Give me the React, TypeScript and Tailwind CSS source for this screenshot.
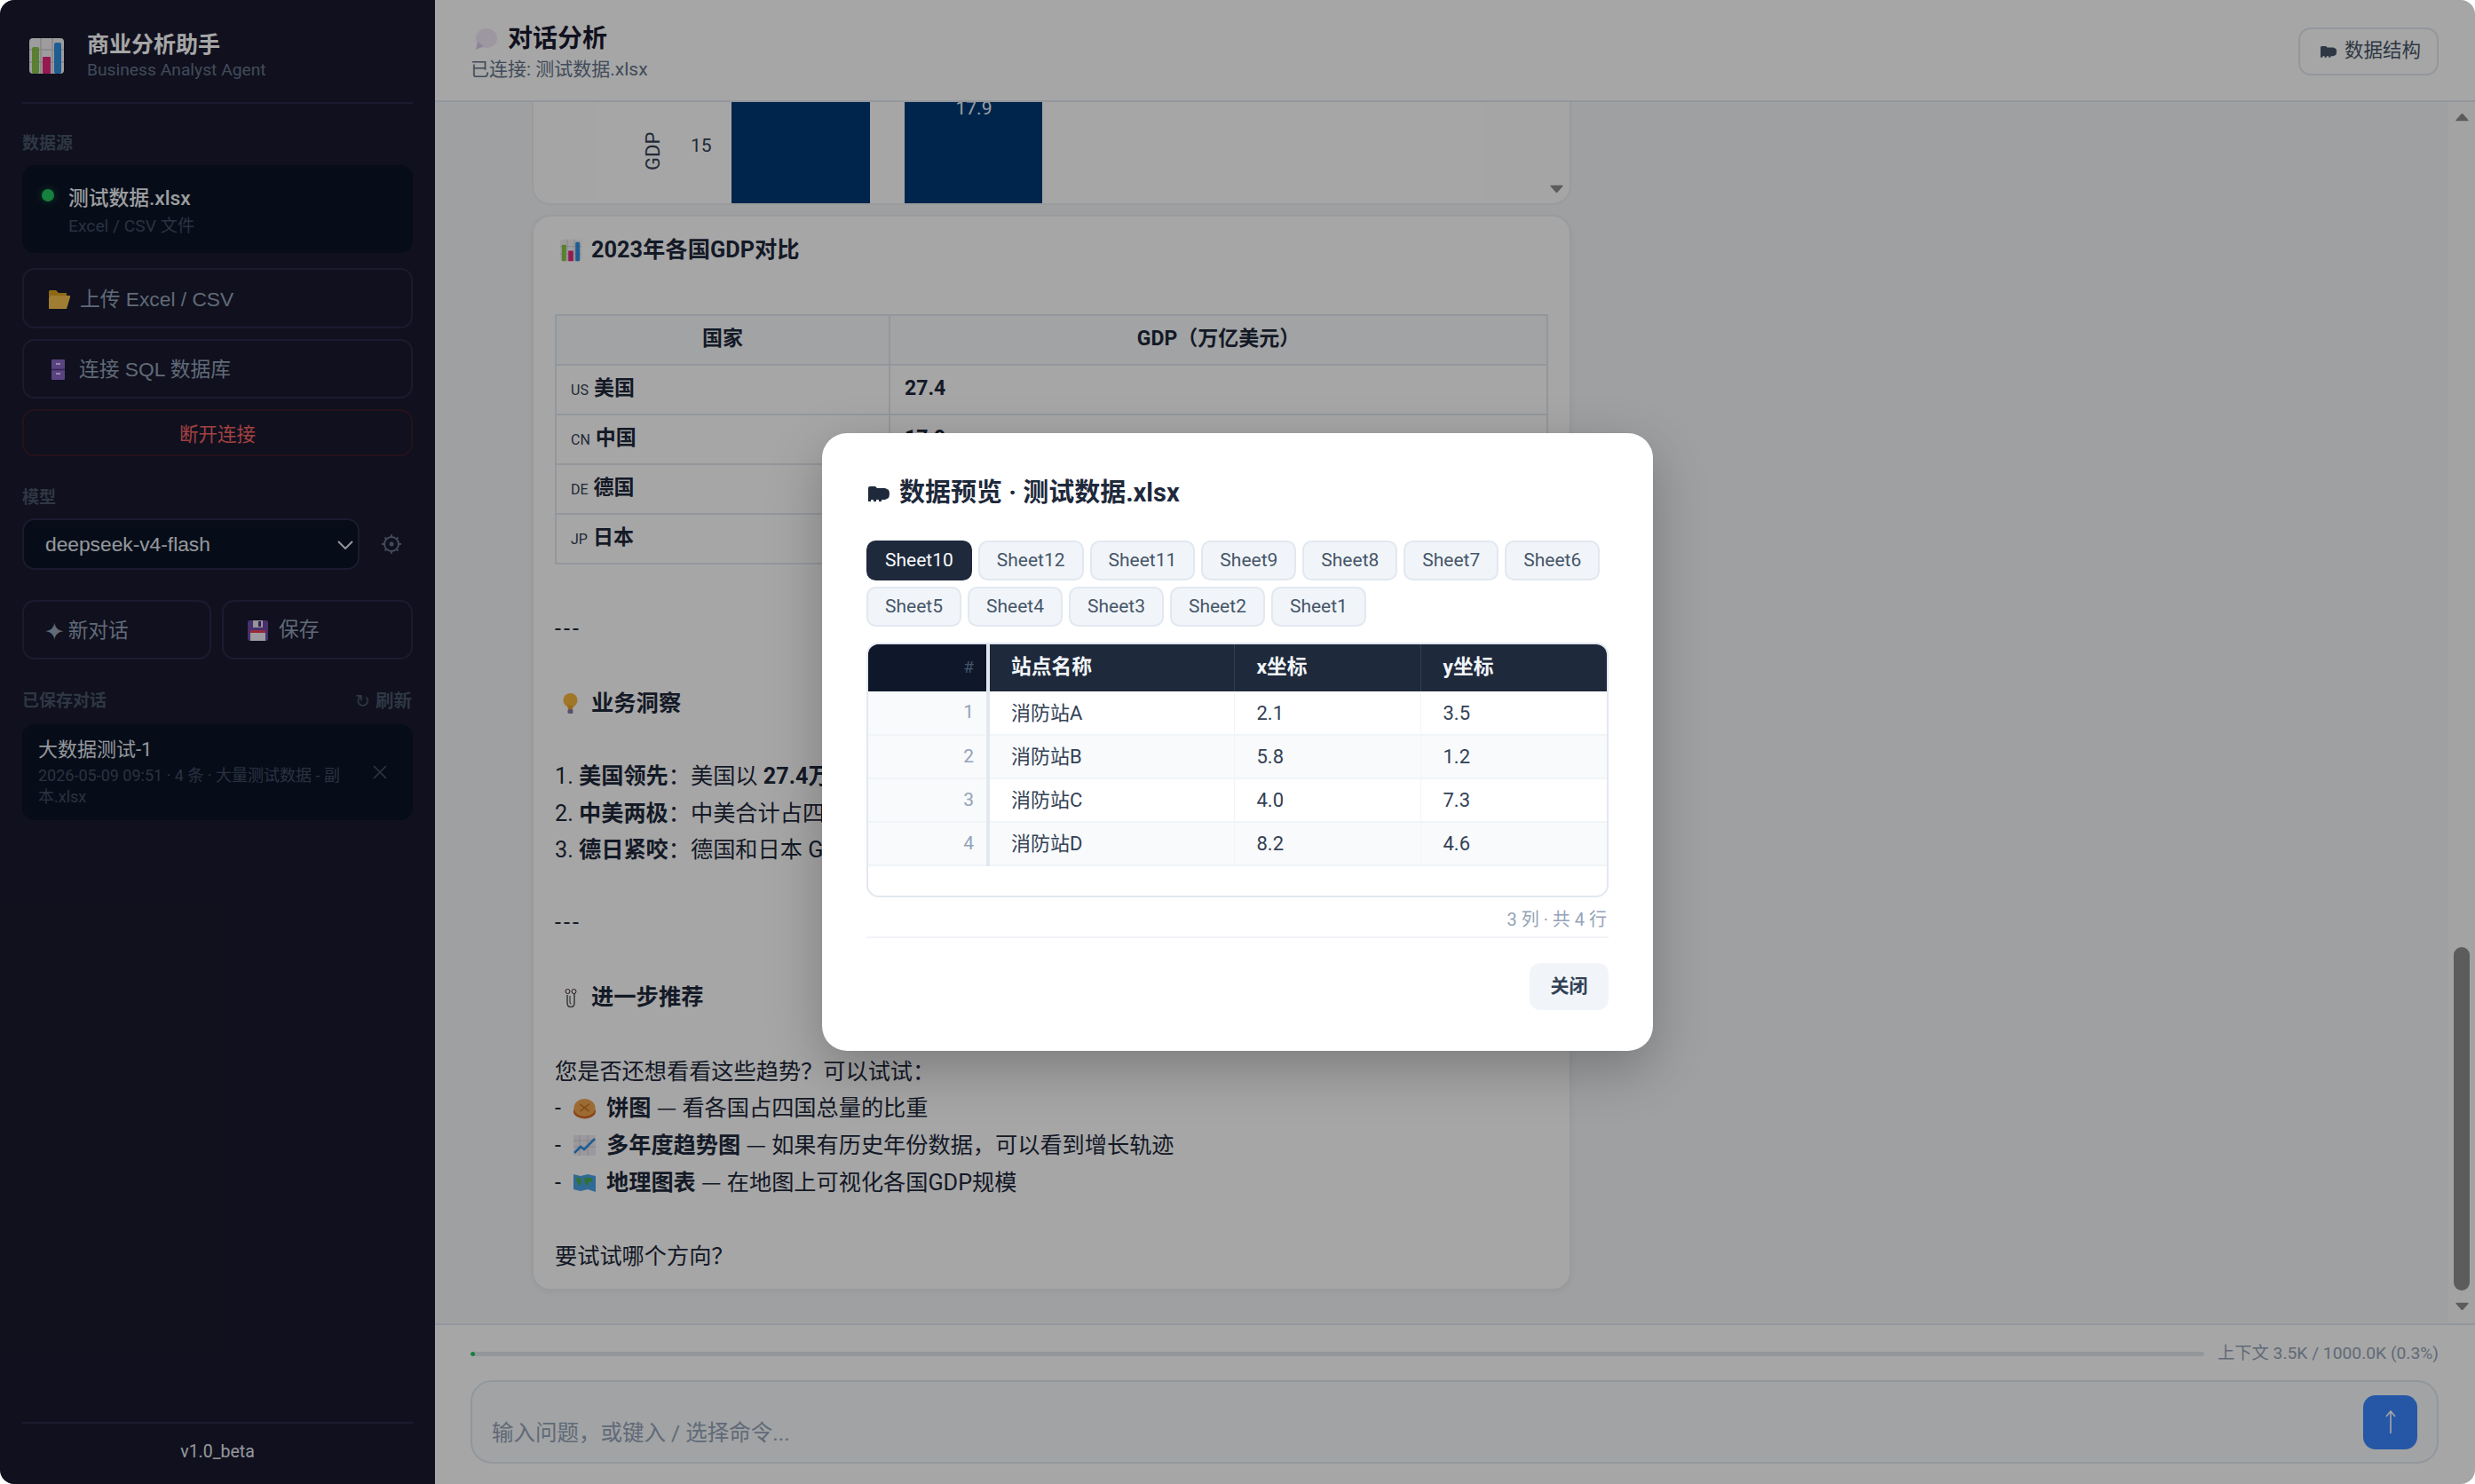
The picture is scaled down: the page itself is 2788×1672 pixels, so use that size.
import React from "react";

const Bars = ({ w, h }: { w: number; h: number }) => (
  <svg width={w} height={h} viewBox="0 0 39 40" className="shrink-0">
    <rect width="39" height="40" rx="4" fill="#f3f1f3" />
    <path d="M0 13H39M0 27H39M13 0V40M26 0V40" stroke="#cfcbd2" strokeWidth="1.5" />
    <rect x="3" y="10" width="8" height="30" rx="2" fill="#8bc34a" />
    <rect x="15" y="21" width="9" height="19" rx="1" fill="#e5267b" />
    <rect x="28" y="5" width="8" height="35" rx="2" fill="#2e8fe0" />
  </svg>
);
const Folder = () => (
  <svg width="24" height="21" viewBox="0 0 24 21" className="shrink-0">
    <path d="M0 1.500Q0 0 1.500 0H8L11 3H20V7H0Z" fill="#d9a21f" />
    <path d="M0 21V8Q1 6 3 6H23Q24.500 6 24 8L20 21Z" fill="#f4c04e" />
  </svg>
);
const Cabinet = () => (
  <svg width="15" height="23" viewBox="0 0 15 23" className="shrink-0">
    <rect width="15" height="23" rx="1" fill="#8a67c7" />
    <path d="M0 11.500H15" stroke="#4d3380" strokeWidth="1.500" />
    <rect x="5" y="4" width="5" height="2" fill="#e3d8f5" />
    <rect x="5" y="15" width="5" height="2" fill="#e3d8f5" />
  </svg>
);
const Floppy = () => (
  <svg width="23" height="23" viewBox="0 0 23 23" className="shrink-0">
    <rect width="23" height="23" rx="2" fill="#6d4aa8" />
    <rect x="6" y="0" width="11" height="8" fill="#e8e4ee" />
    <rect x="12" y="1" width="3" height="6" fill="#4d3380" />
    <rect x="3" y="11" width="17" height="12" fill="#f3eff7" />
    <rect x="3" y="11" width="17" height="3" fill="#ef3f5c" />
  </svg>
);
const Speech = () => (
  <svg width="28" height="24" viewBox="0 0 28 24" className="shrink-0">
    <ellipse cx="15" cy="11" rx="12" ry="11" fill="#f0e9f8" />
    <path d="M5 15L3 24L12 20Z" fill="#d9cbea" />
  </svg>
);
const Blob = ({ c, w = 25, h = 18 }: { c: string; w?: number; h?: number }) => (
  <svg width={w} height={h} viewBox="0 0 25 18" className="shrink-0">
    <path d="M0 3Q0 1 2 1H8L10 3H19L23 5Q25 9 23 14L19 16H15V18H12V16H9V18H6V16H3V18H0Z" fill={c} />
  </svg>
);
const Bulb = () => (
  <svg width="17" height="24" viewBox="0 0 17 24" className="shrink-0">
    <circle cx="8.500" cy="8" r="8" fill="#f6b73c" />
    <path d="M5 14H12L11 18H6Z" fill="#e8a32a" />
    <rect x="5.500" y="18" width="6" height="5" rx="1.500" fill="#8d7ca8" />
  </svg>
);
const Clip = () => (
  <svg width="14" height="24" viewBox="0 0 14 24" className="shrink-0" fill="none">
    <path d="M3 9V18Q3 22.500 7 22.500Q11 22.500 11 18V7" stroke="#55585e" strokeWidth="1.500" />
    <path d="M6 10V17Q6 19 7.500 19" stroke="#55585e" strokeWidth="1.200" />
    <circle cx="3.500" cy="5" r="2.500" fill="#fff" stroke="#3a2320" />
    <circle cx="10.500" cy="5" r="2.500" fill="#fff" stroke="#3a2320" />
  </svg>
);
const Pie = () => (
  <svg width="25" height="24" viewBox="0 0 24 22" className="shrink-0">
    <ellipse cx="12" cy="14" rx="12" ry="8" fill="#d46a26" />
    <ellipse cx="12" cy="10" rx="11.500" ry="9.500" fill="#f0a550" />
    <path d="M7 6L17 14M17 6L7 14" stroke="#c77127" strokeWidth="1.500" />
  </svg>
);
const Trend = () => (
  <svg width="25" height="23" viewBox="0 0 25 23" className="shrink-0">
    <rect width="25" height="23" fill="#efecf3" />
    <path d="M0 6H25M0 13H25M7 0V23M16 0V23" stroke="#cfcbd6" strokeWidth="1" />
    <path d="M1 20L8 13L12 16L24 4" stroke="#2f8fe0" strokeWidth="2.500" fill="none" />
  </svg>
);
const MapIcon = () => (
  <svg width="25" height="21" viewBox="0 0 25 21" className="shrink-0">
    <path d="M0 1L8 3L16 1L25 3V21L16 18L8 20L0 18Z" fill="#4aa3e8" />
    <path d="M3 5L8 5L9 10L6 14L4 10ZM12 5H20L22 9L17 10L16 15L13 11Z" fill="#4caf50" />
  </svg>
);
const Down = ({ s = 25, h = 14 }: { s?: number; h?: number }) => (
  <svg width={s} height={h} viewBox="0 0 16 9"><path d="M1 0H15Q16 0 15.500 1L9 8.500Q8 9 7 8.500L.5 1Q0 0 1 0Z" fill="#8e8e8e" /></svg>
);
const Dash = () => <span className="font-['Noto_Sans_CJK_SC',sans-serif] leading-none">—</span>;

const cjk = "font-['Roboto','Noto_Sans_CJK_SC',sans-serif]";
const arial = "font-['Liberation_Sans','Noto_Sans_CJK_SC',sans-serif]";

const tabs = ["Sheet12", "Sheet11", "Sheet9", "Sheet8", "Sheet7", "Sheet6", "Sheet5", "Sheet4", "Sheet3", "Sheet2", "Sheet1"];
const rows = [
  ["1", "消防站A", "2.1", "3.5"],
  ["2", "消防站B", "5.8", "1.2"],
  ["3", "消防站C", "4.0", "7.3"],
  ["4", "消防站D", "8.2", "4.6"],
];
const gdp = [
  ["US", "美国", "27.4"],
  ["CN", "中国", "17.9"],
  ["DE", "德国", "4.5"],
  ["JP", "日本", "4.2"],
];

const Sidebar = () => (
  <aside className="w-[490px] shrink-0 h-full bg-[#1a1a2e] flex flex-col px-[25px]">
    <div className="h-[117px] shrink-0 border-b-2 border-[#2a2a4a] flex items-center pl-[8px] pt-[10px] gap-[26px]">
      <Bars w={39} h={40} />
      <div className="flex flex-col">
        <span className="text-[25px] leading-[32px] font-bold text-white">商业分析助手</span>
        <span className="text-[19.250px] leading-[24px] text-[#64748b]">Business Analyst Agent</span>
      </div>
    </div>
    <div className="mt-[35px] text-[19px] leading-[20px] font-bold text-[#475569]">数据源</div>
    <div className="mt-[14px] h-[99px] shrink-0 rounded-[14px] bg-[#0b1425] flex pl-[22px] pt-[24px] gap-[16px]">
      <span className="mt-[3px] w-[14px] h-[14px] rounded-full bg-[#22c55e] shadow-[0_0_8px_#22c55e66] shrink-0" />
      <div className="flex flex-col">
        <span className="text-[22.750px] leading-[28px] font-medium text-[#eef2f7]">测试数据.xlsx</span>
        <span className="mt-[4px] text-[19.250px] leading-[26px] text-[#414e65]">Excel / CSV 文件</span>
      </div>
    </div>
    <button className={`mt-[17px] h-[68px] shrink-0 rounded-[14px] border-2 border-[#2a2a4a] flex items-center pl-[28px] pt-[2px] gap-[11px] text-[22.750px] text-[#94a3b8] ${arial}`}>
      <Folder />上传 Excel / CSV
    </button>
    <button className={`mt-[12px] h-[67px] shrink-0 rounded-[14px] border-2 border-[#2a2a4a] flex items-center pl-[31px] pt-[2px] gap-[16px] text-[22.750px] text-[#94a3b8] ${arial}`}>
      <Cabinet />连接 SQL 数据库
    </button>
    <button className={`mt-[12px] h-[53px] shrink-0 rounded-[14px] border-2 border-[#3a1c2a] flex items-center justify-center pt-[5px] text-[21.500px] text-[#f56565] ${arial}`}>
      断开连接
    </button>
    <div className="mt-[37px] text-[19px] leading-[20px] font-bold text-[#475569]">模型</div>
    <div className="mt-[13px] flex items-center gap-[25px]">
      <div className="relative w-[380px] h-[58px] shrink-0">
        <select className={`appearance-none w-full h-full rounded-[14px] border-2 border-[#2a2a4a] bg-[#0b1425] pl-[24px] text-[22.750px] text-[#e2e8f0] ${arial}`}>
          <option>deepseek-v4-flash</option>
        </select>
        <svg width="18" height="10" viewBox="0 0 18 10" className="absolute right-[7px] top-[25px]" fill="none"><path d="M1 1L9 9L17 1" stroke="#e2e8f0" strokeWidth="2" /></svg>
      </div>
      <svg width="22" height="22" viewBox="0 0 22 22" fill="none" className="shrink-0">
        <circle cx="11" cy="11" r="8" stroke="#64748b" strokeWidth="2" />
        <circle cx="11" cy="11" r="2.500" fill="#64748b" />
        <path d="M11 0V3M11 19V22M0 11H3M19 11H22M3.500 3.500L5.500 5.500M16.500 16.500L18.500 18.500M3.500 18.500L5.500 16.500M16.500 5.500L18.500 3.500" stroke="#64748b" strokeWidth="1.800" />
      </svg>
    </div>
    <div className="mt-[34px] flex gap-[12px] shrink-0">
      <button className={`w-[213px] h-[67px] rounded-[14px] border-2 border-[#2a2a4a] flex items-center pl-[23px] pt-[4px] gap-[4px] text-[22.750px] text-[#94a3b8] ${cjk}`}>
        <span className="font-['DejaVu_Sans',sans-serif] text-[27px] leading-none">✦</span>新对话
      </button>
      <button className={`flex-1 h-[67px] rounded-[14px] border-2 border-[#2a2a4a] flex items-center pl-[27px] pt-[2px] gap-[12px] text-[22.750px] text-[#94a3b8] ${cjk}`}>
        <Floppy />保存
      </button>
    </div>
    <div className="mt-[37px] flex justify-between items-center text-[19px] leading-[20px] font-bold text-[#475569]">
      <span>已保存对话</span>
      <span className="flex items-center gap-[6px] text-[20.500px] pr-[1px]"><span className="font-['DejaVu_Sans',sans-serif] font-normal">↻</span>刷新</span>
    </div>
    <div className="mt-[16px] h-[108px] shrink-0 rounded-[14px] bg-[#0b1425] flex items-center pl-[18px] gap-[14px]">
      <div className="w-[347px] shrink-0">
        <div className="text-[22px] leading-[28px] text-[#e2e8f0]">大数据测试-1</div>
        <div className="mt-[3px] text-[18px] leading-[24px] text-[#414e65]">2026-05-09 09:51 · 4 条 · 大量测试数据 - 副本.xlsx</div>
      </div>
      <svg width="16" height="16" viewBox="0 0 16 16" fill="none" className="ml-[16px]"><path d="M1 1L15 15M15 1L1 15" stroke="#475569" strokeWidth="1.500" /></svg>
    </div>
    <div className="mt-auto h-[70px] shrink-0 border-t-2 border-[#2a2a4a] flex items-center justify-center pb-[4px] text-[19.500px] text-[#e2e8f0]">v1.0_beta</div>
  </aside>
);

const ChartCard = () => (
  <div className="relative shrink-0 h-[300px] rounded-b-[21px] bg-[#fefefe] border-x-2 border-b-2 border-[#eceef2] pl-[71px] flex items-end overflow-hidden">
    <svg width="997" height="300" viewBox="0 0 997 300" className="bg-white shrink-0">
      <rect x="152" y="0" width="156" height="300" fill="#003a75" />
      <rect x="347" y="0" width="155" height="300" fill="#003a75" />
      <text x="425" y="200" textAnchor="middle" fontSize="21" fontFamily="Roboto" fill="#eef2f7">17.9</text>
      <text x="106" y="242" fontSize="21" fontFamily="Roboto" fill="#334155">15</text>
      <text transform="translate(71 263) rotate(-90)" fontSize="22" fontFamily="Roboto" fill="#334155">GDP</text>
    </svg>
    <span className="absolute right-[7px] bottom-[10px]"><Down s={15} h={12} /></span>
  </div>
);

const Body = ({ children, className = "" }: { children: React.ReactNode; className?: string }) => (
  <div className={`text-[25.200px] leading-[41.650px] text-[#1e293b] ${className}`}>{children}</div>
);
const Heading = ({ icon, children, className = "" }: { icon: React.ReactNode; children: React.ReactNode; className?: string }) => (
  <div className={`flex items-center h-[42px] text-[25.300px] font-bold text-[#1e293b] ${className}`}>
    <span className="w-[41px] flex justify-center pr-[6px] shrink-0">{icon}</span>{children}
  </div>
);
const Item = ({ icon, children }: { icon: React.ReactNode; children: React.ReactNode }) => (
  <div className="flex items-center h-[41.650px]">
    <span className="w-[21px] tracking-[3px]">-</span>{icon}<span className="ml-[12px]">{children}</span>
  </div>
);

const AnswerCard = () => (
  <div className="shrink-0 mt-[11px] rounded-[21px] bg-white border-2 border-[#eceef2] shadow-[0_2px_6px_#0000000d] px-[24px] pt-[17px] pb-[15px]">
    <Heading icon={<Bars w={24} h={26} />}>2023年各国GDP对比</Heading>
    <table className="mt-[51px] w-full border-collapse table-fixed text-[23px] text-[#1e293b]">
      <thead>
        <tr className="bg-[#f8fafc] h-[56px]">
          <th className="w-[376px] border-2 border-[#e2e8f0] font-bold">国家</th>
          <th className="border-2 border-[#e2e8f0] font-bold">GDP（万亿美元）</th>
        </tr>
      </thead>
      <tbody>
        {gdp.map((r) => (
          <tr key={r[0]} className="h-[56px]">
            <td className="border-2 border-[#e2e8f0] pl-[16px] font-bold"><span className="text-[16px] font-normal text-[#334155] mr-[6px]">{r[0]}</span>{r[1]}</td>
            <td className="border-2 border-[#e2e8f0] pl-[16px] font-bold">{r[2]}</td>
          </tr>
        ))}
      </tbody>
    </table>
    <Body className="mt-[52px] tracking-[3px]">---</Body>
    <Heading className="mt-[43px]" icon={<Bulb />}>业务洞察</Heading>
    <Body className="mt-[40px]">
      <div className="h-[41.650px]">1. <b>美国领先</b>：美国以 <b>27.4万亿美元</b> 位居第一</div>
      <div className="h-[41.650px]">2. <b>中美两极</b>：中美合计占四国总量的大部分</div>
      <div className="h-[41.650px]">3. <b>德日紧咬</b>：德国和日本 GDP 十分接近</div>
    </Body>
    <Body className="mt-[40px] tracking-[3px]">---</Body>
    <Heading className="mt-[42px]" icon={<Clip />}>进一步推荐</Heading>
    <Body className="mt-[42px]">
      <div className="h-[41.650px]">您是否还想看看这些趋势？可以试试：</div>
      <Item icon={<Pie />}><b>饼图</b> <Dash /> 看各国占四国总量的比重</Item>
      <Item icon={<Trend />}><b>多年度趋势图</b> <Dash /> 如果有历史年份数据，可以看到增长轨迹</Item>
      <Item icon={<MapIcon />}><b>地理图表</b> <Dash /> 在地图上可视化各国GDP规模</Item>
    </Body>
    <Body className="mt-[42px]">要试试哪个方向？</Body>
  </div>
);

const Main = () => (
  <main className="flex-1 min-w-0 h-full flex flex-col bg-[#f4f6f9]">
    <header className="h-[115px] shrink-0 bg-white border-b-2 border-[#e2e8f0] flex items-center justify-between pl-[40px] pr-[41px] pt-[5px]">
      <div className="flex flex-col">
        <div className="flex items-center gap-[11px] h-[36px] text-[28px] font-bold text-[#1a1a2e]"><span className="ml-[3px]"><Speech /></span>对话分析</div>
        <div className="mt-[2px] text-[21px] leading-[28px] text-[#64748b]">已连接: 测试数据.xlsx</div>
      </div>
      <button className="-mt-[3px] w-[158px] h-[54px] rounded-[14px] border-2 border-[#e2e8f0] flex items-center justify-center gap-[8px] text-[21.500px] text-[#475569]">
        <span className="ml-[5px] flex"><Blob c="#475569" w={19} h={14} /></span>数据结构
      </button>
    </header>
    <div className="flex-1 min-h-0 flex">
      <div className="flex-1 min-w-0 h-full overflow-hidden flex flex-col justify-end pl-[109px] pr-[988px] pb-[37px]">
        <ChartCard />
        <AnswerCard />
      </div>
      <div className="w-[30px] shrink-0 h-full bg-[#fbfbfb] flex flex-col items-center pt-[11px] pb-[13px]">
        <span className="rotate-180 flex"><Down s={15} h={12} /></span>
        <div className="mt-auto w-[18px] h-[387px] rounded-full bg-[#8e8e8e]" />
        <span className="mt-[12px] flex"><Down s={15} h={12} /></span>
      </div>
    </div>
    <footer className="h-[181px] shrink-0 bg-white border-t-2 border-[#e2e8f0] pl-[40px] pr-[41px] flex flex-col">
      <div className="mt-[20px] h-[24px] flex items-center gap-[15px]">
        <div className="flex-1 h-[5px] rounded-full bg-[#e2e8f0] overflow-hidden">
          <div className="w-[5px] h-full rounded-full bg-[#22c55e]" />
        </div>
        <span className="text-[19.250px] text-[#94a3b8] whitespace-nowrap">上下文 3.5K / 1000.0K (0.3%)</span>
      </div>
      <div className="mt-[18px] h-[94px] rounded-[24px] border-2 border-[#e2e8f0] bg-[#f8fafc] flex items-center justify-between pl-[22px] pr-[22px]">
        <span className="mt-[26px] text-[24.500px] text-[#94a3b8]">输入问题，或键入 / 选择命令...</span>
        <span className="w-[61px] h-[61px] rounded-[14px] bg-[#3a86ff] flex items-center justify-center">
          <svg width="12" height="26" viewBox="0 0 12 26" fill="none"><path d="M6 26V1M1 7L6 1L11 7" stroke="#ffffff" strokeWidth="1.600" /></svg>
        </span>
      </div>
    </footer>
  </main>
);

const Modal = () => (
  <div className="absolute inset-0 bg-black/35 flex items-center justify-center">
    <div className="w-[936px] h-[696px] bg-white rounded-[28px] px-[50px] pt-[49px] shadow-[0_20px_60px_#00000040] flex flex-col">
      <div className="h-[37px] flex items-center gap-[10px] text-[29px] font-bold text-[#1e293b] pl-[2px]"><Blob c="#1e293b" />数据预览 · 测试数据.xlsx</div>
      <div className="mt-[35px] flex flex-wrap gap-x-[7px] gap-y-[7px]">
        <span className="h-[45px] px-[21px] rounded-[10.500px] bg-[#1e293b] text-[#f8fafc] text-[21px] flex items-center">Sheet10</span>
        {tabs.map((t) => (
          <span key={t} className="h-[45px] px-[19px] rounded-[10.500px] bg-[#f1f5f9] border-2 border-[#e2e8f0] text-[#475569] text-[21px] flex items-center">{t}</span>
        ))}
      </div>
      <div className="mt-[18px] h-[287px] shrink-0 rounded-[14px] border-2 border-[#e2e8f0] overflow-hidden">
        <table className="w-full border-collapse table-fixed text-[22px]">
          <thead>
            <tr className="h-[53px] bg-[#1e293b] text-[#f1f5f9] text-left text-[22.750px]">
              <th className="w-[135px] bg-[#0f172a] border-r-[4px] border-[#e2e8f0] text-right pr-[14px] text-[19px] font-normal text-[#475569]">#</th>
              <th className="w-[277px] pl-[24px] font-bold border-r border-[#334155]">站点名称</th>
              <th className="w-[210px] pl-[25px] font-bold border-r border-[#334155]">x坐标</th>
              <th className="pl-[25px] font-bold">y坐标</th>
            </tr>
          </thead>
          <tbody>
            {rows.map((r, i) => (
              <tr key={r[0]} className={`h-[49px] border-b-2 border-[#f1f5f9] text-[#334155] ${i % 2 ? "bg-[#f8fafc]" : "bg-white"}`}>
                <td className="bg-[#f8fafc] border-r-[4px] border-[#e2e8f0] text-right pr-[14px] text-[#94a3b8] text-[21px]">{r[0]}</td>
                <td className="pl-[24px] border-r border-[#f1f5f9]">{r[1]}</td>
                <td className="pl-[25px] border-r border-[#f1f5f9]">{r[2]}</td>
                <td className="pl-[25px]">{r[3]}</td>
              </tr>
            ))}
          </tbody>
        </table>
      </div>
      <div className="mt-[9px] h-[32px] flex items-center justify-end pr-[2px] text-[20px] text-[#94a3b8]">3 列 · 共 4 行</div>
      <div className="mt-[3px] h-[2px] bg-[#f1f5f9]" />
      <div className="mt-[28px] flex justify-end">
        <button className="w-[89px] h-[53px] rounded-[12px] bg-[#f1f5f9] text-[21px] font-bold text-[#334155]">关闭</button>
      </div>
    </div>
  </div>
);

export default function App() {
  return (
    <div className={`w-[2788px] h-[1672px] bg-white ${cjk}`}>
      <div className="relative w-full h-full rounded-[16px] overflow-hidden flex">
        <Sidebar />
        <Main />
        <Modal />
      </div>
    </div>
  );
}
